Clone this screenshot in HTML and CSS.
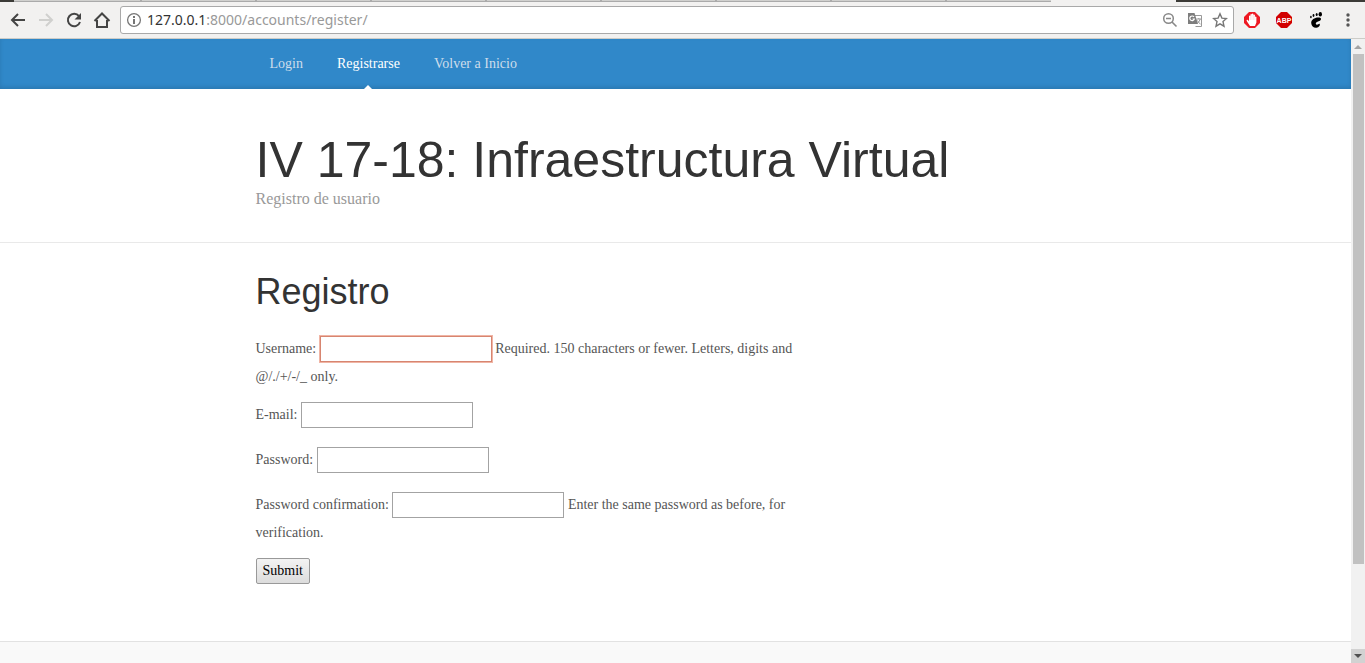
FILE: index.html
```html
<!DOCTYPE html>
<html lang="es">
<head>
<meta charset="utf-8">
<title>IV 17-18: Infraestructura Virtual</title>
<link rel="stylesheet" href="styles.css">
</head>
<body>
<div class="window">
  <div class="tabstrip">
    <span class="tab-edge"></span>
    <div class="tabs"><i></i><i></i><i></i><i></i><i></i><i></i><i></i><i></i><i></i></div>
    <span class="titlebar"></span>
  </div>
  <div class="toolbar">
    <div class="nav-buttons">
      <button class="tool" aria-label="Back"><svg viewBox="0 0 18 18"><path d="M16 9H3M9 3L3 9l6 6" fill="none" stroke="#444" stroke-width="2"/></svg></button>
      <button class="tool" aria-label="Forward"><svg viewBox="0 0 18 18"><path d="M2 9h13M9 3l6 6-6 6" fill="none" stroke="#d0d0ce" stroke-width="2"/></svg></button>
      <button class="tool" aria-label="Reload"><svg viewBox="0 0 18 18"><path d="M14 5.2A6.2 6.2 0 1 0 15 11" fill="none" stroke="#444" stroke-width="2"/><path d="M16 2v6.500H9.500z" fill="#444"/></svg></button>
      <button class="tool" aria-label="Home"><svg viewBox="0 0 18 18"><path d="M1.500 10L9 2.500l7.500 7.500M4 9v7h10V9" fill="none" stroke="#444" stroke-width="2"/></svg></button>
    </div>
    <div class="omnibox">
      <svg class="info" viewBox="0 0 16 16"><circle cx="8" cy="8" r="6.400" fill="none" stroke="#777" stroke-width="1.300"/><path d="M8 4v2M8 7v5" stroke="#666" stroke-width="1.800"/></svg>
      <div class="url"><span class="host">127.0.0.1</span>:8000/accounts/register/</div>
      <svg class="mini" viewBox="0 0 16 16"><circle cx="6.500" cy="6.500" r="4.800" fill="none" stroke="#888" stroke-width="1.500"/><path d="M4 6.500h5M10 10l4.500 4.500" fill="none" stroke="#888" stroke-width="1.600"/></svg>
      <svg class="mini" viewBox="0 0 16 16"><path d="M7 3.500h7.500v11H8.500" fill="none" stroke="#999"/><path d="M1 1h6.500l3.500 11H1z" fill="#7d7d7d"/><path d="M7 5A2.300 2.300 0 1 0 7.300 7H5.500" fill="none" stroke="#fff" stroke-width="1.200"/><path d="M9.500 7H14M11.800 6v1M13.200 7q-.5 3-3 4M10.500 8.500q1 2.500 3 3.500" fill="none" stroke="#999"/></svg>
      <svg class="mini" viewBox="0 0 16 16"><path d="M8 1.800l1.900 4.300 4.600.4-3.500 3.100 1 4.600L8 11.800l-4 2.400 1-4.600L1.500 6.500l4.600-.4z" fill="none" stroke="#777" stroke-width="1.400"/></svg>
    </div>
    <div class="extensions">
      <svg class="ext" viewBox="0 0 16 16"><path d="M5 0h6l5 5v6l-5 5H5l-5-5V5z" fill="#ee1822"/><path d="M6 14L3 9.500 2.500 8l1.200-.2L5 9.300V4q.7-1 1.400 0V2.500q.8-1 1.500 0V2q.8-1 1.500 0v1q.8-.8 1.500 0v2q.8-.8 1.500 0v5.500L11 14z" fill="#fff"/><path d="M6.400 4v4M7.900 3v5M9.400 3v5M10.900 5v3" stroke="#f6b5b8" stroke-width=".4"/></svg>
      <svg class="ext" viewBox="0 0 16 16"><path d="M5 0h6l5 5v6l-5 5H5l-5-5V5z" fill="#d20000"/><text x="8" y="11" text-anchor="middle" class="abp">ABP</text></svg>
      <svg class="ext" viewBox="0 0 16 16"><path d="M11.500 5.500C7 5 3 7.500 3.200 11c.2 3 2.500 5 5.300 4.700 2.500-.3 3.700-2 3.300-3.700-1-.7-1.500.8-3 .7-1.300-.2-1.500-2 .1-2.700C11.500 9 13 8.500 13 7c0-.8-.6-1.400-1.500-1.500z"/><ellipse cx="12.300" cy="2.300" rx="1.700" ry="2.300"/><ellipse cx="8.700" cy="2.500" rx="1" ry="1.600"/><ellipse cx="5.500" cy="3.500" rx=".9" ry="1.400"/><ellipse cx="2.900" cy="5" rx=".8" ry="1.200"/></svg>
      <button class="tool menu" aria-label="Menu"><svg viewBox="0 0 16 16" fill="#555"><circle cx="8" cy="3" r="1.700"/><circle cx="8" cy="8" r="1.700"/><circle cx="8" cy="13" r="1.700"/></svg></button>
    </div>
  </div>
  <div class="viewport">
    <div class="page">
      <div class="masthead">
        <nav class="container blog-nav">
          <a href="#">Login</a>
          <a href="#" class="active">Registrarse</a>
          <a href="#">Volver a Inicio</a>
        </nav>
      </div>
      <header class="blog-header">
        <div class="container">
          <h1>IV 17-18: Infraestructura Virtual</h1>
          <p>Registro de usuario</p>
        </div>
      </header>
      <main class="container">
        <div class="blog-main">
          <h2>Registro</h2>
          <form>
            <p><label for="username">Username:</label> <input id="username" class="focused" type="text"> Required. 150 characters or fewer. Letters, digits and @/./+/-/_ only.</p>
            <p><label for="email">E-mail:</label> <input id="email" type="email"></p>
            <p><label for="password1">Password:</label> <input id="password1" type="password"></p>
            <p><label for="password2">Password confirmation:</label> <input id="password2" type="password"> Enter the same password as before, for verification.</p>
            <p><button type="submit">Submit</button></p>
          </form>
        </div>
      </main>
      <footer class="blog-footer"></footer>
    </div>
    <div class="scrollbar">
      <svg class="arrow" viewBox="0 0 14 14"><path d="M3 10h8L7 6z" fill="#a3a3a3"/></svg>
      <div class="track"><div class="thumb"></div><div class="rest"></div></div>
      <svg class="arrow down" viewBox="0 0 14 14"><path d="M3 5h8L7 9z" fill="#505050"/></svg>
    </div>
  </div>
</div>
</body>
</html>
```

FILE: styles.css
```css
* { box-sizing: border-box; }
body { margin: 0; font-family: "Liberation Serif", serif; font-size: 14px; line-height: 28px; color: #555; background: #fff; }
h1, h2, p { margin: 0; }
h1, h2 { font-family: "Liberation Sans", sans-serif; font-weight: normal; color: #333; }

.window { display: flex; flex-direction: column; height: 100vh; overflow: hidden; }

.tabstrip { display: flex; height: 2px; background: #f2f1f0; }
.tab-edge { width: 14px; background: #3c3b37; }
.tabs { display: flex; width: 1037px; overflow: hidden; background: #d0d0ce; border-bottom: 1px solid #aaa; }
.tabs i { flex: none; width: 115px; border-right: 2px solid #aaa; }
.tabs i:first-child { width: 128px; }
.tabs i:last-child { border: 0; }
.titlebar { width: 189px; margin-left: auto; background: #3c3b37; }

.toolbar { display: flex; align-items: center; height: 37px; background: #f2f1f0; border-bottom: 1px solid #ccccc8; }
.tool { display: flex; padding: 0; border: 0; background: none; }
.nav-buttons { display: flex; gap: 10px; padding: 0 9px; }
.nav-buttons svg { width: 18px; height: 18px; }
.omnibox { display: flex; flex: 1; align-items: center; gap: 9px; height: 28px; padding: 0 5px; background: #fff; border: 1px solid #a9a9a9; border-radius: 3px; }
.info { width: 16px; height: 16px; }
.mini { width: 16px; height: 16px; }
.url { flex: 1; margin-left: -4px; font-family: "Noto Sans", sans-serif; font-size: 14px; line-height: 20px; color: #999; }
.host { color: #333; }
.extensions { display: flex; gap: 16px; padding: 0 9px 0 10px; }
.ext { width: 16px; height: 16px; }
.menu svg { width: 16px; height: 16px; }
.abp { font-family: "Liberation Sans", sans-serif; font-size: 7px; font-weight: bold; fill: #fff; }

.viewport { display: flex; flex: 1; min-height: 0; }
.page { display: flex; flex: 1; flex-direction: column; overflow: hidden; }
.container { width: 100%; max-width: 864px; margin: 0 auto; padding: 0 12px; }

.masthead { background: #3088c9; box-shadow: inset 0 -2px 4px rgba(0, 0, 0, .12); }
.blog-nav { display: flex; gap: 34px; padding-left: 26px; }
.blog-nav a { position: relative; height: 50px; line-height: 50px; color: #cdddeb; text-decoration: none; }
.blog-nav .active { color: #fff; }
.blog-nav .active::after { content: ""; position: absolute; bottom: 0; left: 50%; margin-left: -4px; border: 4px solid transparent; border-top: 0; border-bottom-color: #fff; }

.blog-header { padding: 44px 0 31px; border-bottom: 1px solid #e9e9e9; }
.blog-header h1 { font-size: 50px; line-height: 54px; }
.blog-header p { font-size: 16px; line-height: 24px; color: #999; }

.blog-main { width: 66%; padding-top: 29px; }
.blog-main h2 { margin-bottom: 23px; font-size: 36px; line-height: 40px; }
form { display: grid; gap: 10px; }
form p { min-height: 35px; }
input, form button { height: 26px; font: inherit; line-height: 20px; }
input { width: 172px; padding: 0 4px; background: #fff; border: 1px solid #a3a3a3; outline: 0; }
.focused, input:focus { border-color: #d78570; box-shadow: 0 0 0 1px #f0b5a5; }
form button { padding: 0 6px; color: #000; border: 1px solid #999; border-radius: 2px; background: linear-gradient(#f3f3f3, #dcdcdc); }

.blog-footer { flex: 1; margin-top: 49px; background: #f9f9f9; border-top: 1px solid #e2e2e2; }

.scrollbar { display: flex; flex-direction: column; width: 14px; background: #f1f1f1; }
.arrow { width: 14px; height: 14px; }
.down { background: #d2d2d2; }
.track { display: flex; flex: 1; flex-direction: column; padding: 1px 1px 0 2px; }
.thumb { flex: 6; background: #c1c1c1; }
.rest { flex: 1; }
```
